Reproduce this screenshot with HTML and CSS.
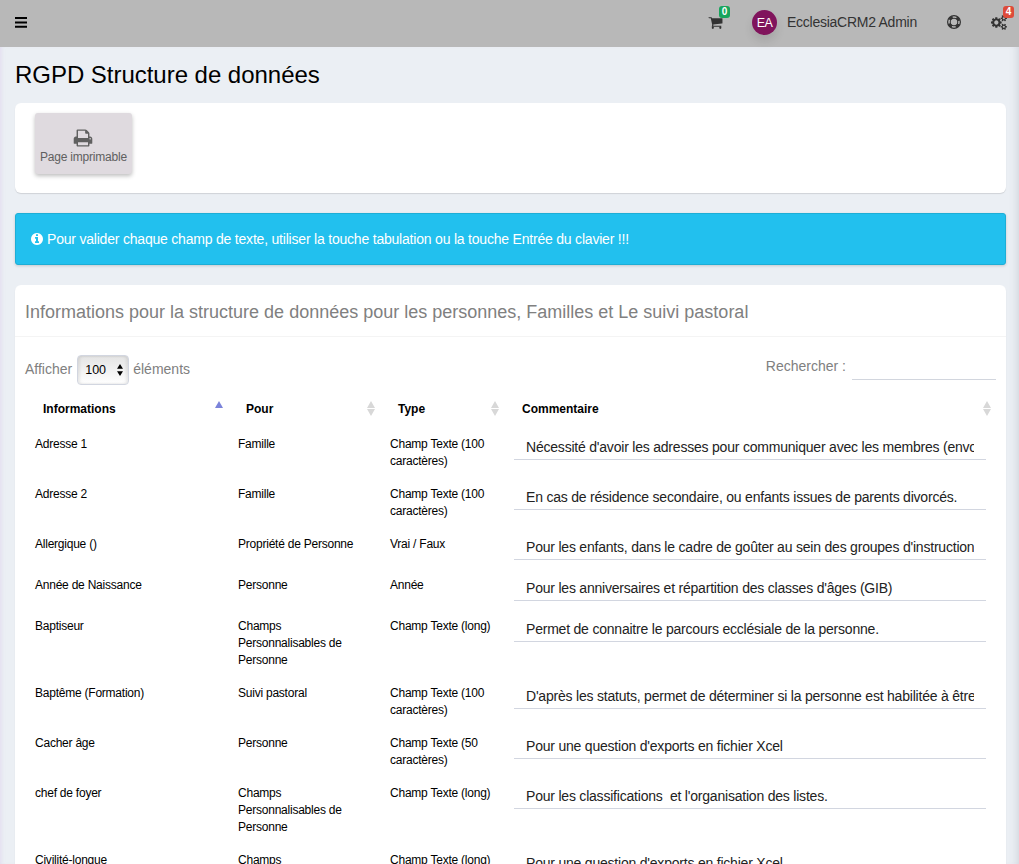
FILE: index.html
```html
<!DOCTYPE html>
<html lang="fr">
<head>
<meta charset="utf-8">
<title>RGPD Structure de données</title>
<link rel="stylesheet" href="styles.css">
</head>
<body>
<header class="topbar">
  <svg class="icon menu" viewBox="0 0 12 11"><path d="M0 0h12v2H0zM0 4.400h12v2H0zM0 8.800h12v2H0z"/></svg>
  <nav class="tools">
    <div class="tool cart"><svg class="icon" viewBox="0 0 1792 1792"><path d="M704 1536q0 52-38 90t-90 38-90-38-38-90 38-90 90-38 90 38 38 90zm896 0q0 52-38 90t-90 38-90-38-38-90 38-90 90-38 90 38 38 90zm128-1088v512q0 24-16.500 42.500t-40.500 21.500l-1044 122q13 60 13 70 0 16-24 64h920q26 0 45 19t19 45-19 45-45 19h-1024q-26 0-45-19t-19-45q0-11 8-31.500t16-36 21.500-40 15.500-29.500l-177-823h-204q-26 0-45-19t-19-45 19-45 45-19h256q16 0 28.500 6.500t19.500 15.500 13 24.500 8 26 5.500 29.500 4.500 26h1201q26 0 45 19t19 45z"/></svg><span class="badge green">0</span></div>
    <span class="avatar">EA</span>
    <span class="user">EcclesiaCRM2 Admin</span>
    <svg class="icon ring" viewBox="0 0 16 16"><g fill="none" stroke="currentColor"><circle cx="8" cy="8" r="7.300" stroke-width="1.400"/><circle cx="8" cy="8" r="4.300" stroke-width="1.200"/><circle cx="8" cy="8" r="5.700" stroke-width="3" stroke-dasharray="4.476 4.476" stroke-dashoffset="-2.238"/></g></svg>
    <div class="tool cogs"><svg class="icon" viewBox="0 0 1920 1792"><path d="M896 896q0-106-75-181t-181-75-181 75-75 181 75 181 181 75 181-75 75-181zm768 512q0-52-38-90t-90-38-90 38-38 90q0 53 37.500 90.500t90.500 37.500 90.500-37.500 37.500-90.500zm0-1024q0-52-38-90t-90-38-90 38-38 90q0 53 37.500 90.500t90.500 37.500 90.500-37.500 37.500-90.500zm-384 421v185q0 10-7 19.500t-16 10.500l-155 24q-11 35-32 76 34 48 90 115 7 11 7 20 0 12-7 19-23 30-82.500 89.500t-78.500 59.500q-11 0-21-7l-115-90q-37 19-77 31-11 108-23 155-7 24-30 24h-186q-11 0-20-7.500t-10-17.500l-23-153q-34-10-75-31l-118 89q-7 7-20 7-11 0-21-8-144-133-144-160 0-9 7-19 10-14 41-53t47-61q-23-44-35-82l-152-24q-10-1-17-9.500t-7-19.500v-185q0-10 7-19.500t16-10.500l155-24q11-35 32-76-34-48-90-115-7-11-7-20 0-12 7-20 22-30 82-89t79-59q11 0 21 7l115 90q34-18 77-32 11-108 23-154 7-24 30-24h186q11 0 20 7.500t10 17.500l23 153q34 10 75 31l118-89q8-7 20-7 11 0 21 8 144 133 144 160 0 8-7 19-12 16-42 54t-45 60q23 48 34 82l152 23q10 2 17 10.500t7 19.500zm640 533v140q0 16-149 31-12 27-30 52 51 113 51 138 0 4-4 7-122 71-124 71-8 0-46-47t-52-68q-20 2-30 2t-30-2q-14 21-52 68t-46 47q-2 0-124-71-4-3-4-7 0-25 51-138-18-25-30-52-149-15-149-31v-140q0-16 149-31 13-29 30-52-51-113-51-138 0-4 4-7 4-2 35-20t59-34 30-16q8 0 46 46.500t52 67.500q20-2 30-2t30 2q51-71 92-112l6-2q4 0 124 70 4 3 4 7 0 25-51 138 17 23 30 52 149 15 149 31zm0-1024v140q0 16-149 31-12 27-30 52 51 113 51 138 0 4-4 7-122 71-124 71-8 0-46-47t-52-68q-20 2-30 2t-30-2q-14 21-52 68t-46 47q-2 0-124-71-4-3-4-7 0-25 51-138-18-25-30-52-149-15-149-31v-140q0-16 149-31 13-29 30-52-51-113-51-138 0-4 4-7 4-2 35-20t59-34 30-16q8 0 46 46.500t52 67.500q20-2 30-2t30 2q51-71 92-112l6-2q4 0 124 70 4 3 4 7 0 25-51 138 17 23 30 52 149 15 149 31z"/></svg><span class="badge red">4</span></div>
  </nav>
</header>
<main class="content">
  <h1 class="title">RGPD Structure de données</h1>
  <section class="box actions">
    <div class="app-button"><svg class="icon" viewBox="0 0 1792 1792"><path d="M448 1536h896v-256h-896v256zm0-640h896v-384h-160q-40 0-68-28t-28-68v-160h-640v640zm1152 64q0-26-19-45t-45-19-45 19-19 45 19 45 45 19 45-19 19-45zm128 0v416q0 13-9.500 22.500t-22.500 9.500h-224v160q0 40-28 68t-68 28h-960q-40 0-68-28t-28-68v-160h-224q-13 0-22.500-9.500t-9.500-22.500v-416q0-79 56.500-135.500t135.500-56.500h64v-544q0-40 28-68t68-28h672q40 0 88 20t76 48l152 152q28 28 48 76t20 88v256h64q79 0 135.500 56.500t56.500 135.500z"/></svg><span class="app-label">Page imprimable</span></div>
  </section>
  <div class="alert"><svg class="icon" viewBox="128 128 1536 1536"><path d="M1152 1376v-160q0-14-9-23t-23-9h-96v-512q0-14-9-23t-23-9h-320q-14 0-23 9t-9 23v160q0 14 9 23t23 9h96v320h-96q-14 0-23 9t-9 23v160q0 14 9 23t23 9h448q14 0 23-9t9-23zm-128-896v-160q0-14-9-23t-23-9h-192q-14 0-23 9t-9 23v160q0 14 9 23t23 9h192q14 0 23-9t9-23zm640 416q0 209-103 385.500t-279.500 279.500-385.500 103-385.500-103-279.500-279.500-103-385.500 103-385.500 279.500-279.500 385.500-103 385.500 103 279.500 279.500 103 385.500z"/></svg><span>Pour valider chaque champ de texte, utiliser la touche tabulation ou la touche Entrée du clavier !!!</span></div>
  <section class="box data">
    <h2 class="box-title">Informations pour la structure de données pour les personnes, Familles et Le suivi pastoral</h2>
    <div class="controls">
      <div class="length"><span>Afficher</span><div class="select"><span>100</span><svg viewBox="0 0 6 12"><path d="M3 0l3 4.800H0zM3 12l3-4.800H0z"/></svg></div><span>éléments</span></div>
      <div class="search"><span>Rechercher :</span><div class="search-field"></div></div>
    </div>
    <table class="grid">
      <colgroup><col class="c1"><col class="c2"><col class="c3"><col class="c4"></colgroup>
      <thead><tr>
        <th><div class="head"><span>Informations</span><svg class="sort active" viewBox="0 0 8 15"><path d="M4 0l4 7H0z"/></svg></div></th>
        <th><div class="head"><span>Pour</span><svg class="sort" viewBox="0 0 8 15"><path d="M4 0l4 7H0zM4 15l4-7H0z"/></svg></div></th>
        <th><div class="head"><span>Type</span><svg class="sort" viewBox="0 0 8 15"><path d="M4 0l4 7H0zM4 15l4-7H0z"/></svg></div></th>
        <th><div class="head"><span>Commentaire</span><svg class="sort" viewBox="0 0 8 15"><path d="M4 0l4 7H0zM4 15l4-7H0z"/></svg></div></th>
      </tr></thead>
      <tbody>
        <tr><td>Adresse 1</td><td>Famille</td><td>Champ Texte (100<br>caractères)</td><td><div class="field"><div class="value">Nécessité d'avoir les adresses pour communiquer avec les membres (envo</div></div></td></tr>
        <tr><td>Adresse 2</td><td>Famille</td><td>Champ Texte (100<br>caractères)</td><td><div class="field"><div class="value">En cas de résidence secondaire, ou enfants issues de parents divorcés.</div></div></td></tr>
        <tr><td>Allergique ()</td><td>Propriété de Personne</td><td>Vrai / Faux</td><td><div class="field"><div class="value">Pour les enfants, dans le cadre de goûter au sein des groupes d'instruction</div></div></td></tr>
        <tr><td>Année de Naissance</td><td>Personne</td><td>Année</td><td><div class="field"><div class="value">Pour les anniversaires et répartition des classes d'âges (GIB)</div></div></td></tr>
        <tr><td>Baptiseur</td><td>Champs<br>Personnalisables de<br>Personne</td><td>Champ Texte (long)</td><td><div class="field"><div class="value">Permet de connaitre le parcours ecclésiale de la personne.</div></div></td></tr>
        <tr><td>Baptême (Formation)</td><td>Suivi pastoral</td><td>Champ Texte (100<br>caractères)</td><td><div class="field"><div class="value">D'après les statuts, permet de déterminer si la personne est habilitée à être</div></div></td></tr>
        <tr><td>Cacher âge</td><td>Personne</td><td>Champ Texte (50<br>caractères)</td><td><div class="field"><div class="value">Pour une question d'exports en fichier Xcel</div></div></td></tr>
        <tr><td>chef de foyer</td><td>Champs<br>Personnalisables de<br>Personne</td><td>Champ Texte (long)</td><td><div class="field"><div class="value">Pour les classifications  et l'organisation des listes.</div></div></td></tr>
        <tr><td>Civilité-longue</td><td>Champs<br>Personnalisables de<br>Personne</td><td>Champ Texte (long)</td><td><div class="field"><div class="value">Pour une question d'exports en fichier Xcel</div></div></td></tr>
      </tbody>
    </table>
  </section>
</main>
</body>
</html>
```
FILE: styles.css
```css
* { box-sizing: border-box; }
html, body { height: 100%; }
body {
  margin: 0;
  display: flex;
  flex-direction: column;
  overflow: hidden;
  font-family: "Liberation Sans", Arial, sans-serif;
  font-size: 14px;
  color: #000;
  background: #ebeff4;
}
.icon { display: block; fill: currentColor; flex: none; }

.topbar {
  flex: none;
  height: 47px;
  display: flex;
  align-items: center;
  justify-content: space-between;
  padding: 0 12px 3px 15px;
  background: #b8b8b8;
  color: #333;
}
.menu { width: 12px; height: 11px; color: #000; }
.tools { display: flex; align-items: center; }
.tool { position: relative; }
.cart .icon { width: 15px; height: 15px; margin-right: 1px; }
.cogs .icon { width: 16px; height: 15px; }
.badge {
  position: absolute;
  width: 11px;
  height: 12px;
  border-radius: 3px;
  color: #fff;
  font-size: 10px;
  font-weight: bold;
  line-height: 12px;
  text-align: center;
}
.green { background: #18a55c; left: 11px; top: -9px; }
.red { background: #dd4b39; left: 12px; top: -9px; }
.avatar {
  width: 25px;
  height: 25px;
  margin-left: 28px;
  border-radius: 50%;
  background: #80145c;
  color: #fff;
  font-size: 12.500px;
  letter-spacing: -0.600px;
  line-height: 26px;
  text-align: center;
  box-shadow: 0 6px 10px rgba(0, 0, 0, .1);
}
.user { width: 131px; margin-left: 10px; letter-spacing: -0.260px; white-space: nowrap; }
.ring { width: 14px; height: 14px; margin-left: 29px; }
.cogs { margin-left: 30px; }

.content {
  flex: 1;
  min-height: 0;
  overflow: hidden;
  padding: 0 13px 0 15px;
  box-shadow: inset 4px 0 4px -3px rgba(200, 170, 225, .28), inset -9px 0 8px -8px rgba(90, 100, 120, .22);
}
.title { margin: 0; height: 56px; font-size: 24px; font-weight: 400; line-height: 55px; letter-spacing: -0.030px; }
.box { background: #fff; border-radius: 6px; box-shadow: 0 1px 1px rgba(0, 0, 0, .12); }
.actions { height: 90px; padding: 10px 20px; }
.app-button {
  width: 97px;
  height: 61px;
  display: flex;
  flex-direction: column;
  align-items: center;
  padding-top: 15px;
  border-radius: 3px;
  background: #dfdadf;
  color: #606060;
  box-shadow: 0 2px 4px rgba(0, 0, 0, .26);
}
.app-button .icon { width: 20px; height: 20px; margin-right: 1px; }
.app-label { font-size: 12px; line-height: 18px; letter-spacing: -0.200px; white-space: nowrap; }
.alert {
  height: 52px;
  margin: 20px 0;
  display: flex;
  align-items: center;
  gap: 4px;
  padding-left: 15px;
  border: 1px solid #1daed6;
  border-radius: 3px;
  background: #22c0ee;
  color: #fff;
  white-space: nowrap;
  letter-spacing: -0.205px;
  box-shadow: 0 1px 3px rgba(0, 0, 0, .16);
}
.alert .icon { width: 12px; height: 12px; }

.data { height: 700px; }
.box-title {
  margin: 0;
  height: 52px;
  padding-left: 10px;
  border-bottom: 1px solid #f4f4f4;
  color: #808080;
  font-size: 18px;
  font-weight: 400;
  line-height: 54px;
  white-space: nowrap;
}
.controls { height: 58px; display: flex; justify-content: space-between; padding: 17px 10px 0; color: #808080; }
.length { display: flex; align-items: center; height: 30px; line-height: 16px; gap: 4px; margin-top: 1px; }
.length > span { padding-bottom: 2px; }
.select {
  width: 52px;
  height: 30px;
  margin-left: 1px;
  display: flex;
  align-items: center;
  justify-content: space-between;
  padding: 0 5px 0 7px;
  border: 1px solid #d2d6e0;
  border-radius: 4px;
  background: linear-gradient(#e4e4e4, #fff);
  box-shadow: inset 2px 0 3px rgba(0, 0, 0, .08), inset -2px 0 3px rgba(0, 0, 0, .08);
  color: #000;
  font-size: 12.500px;
}
.select svg { width: 6px; height: 12px; }
.search { display: flex; height: 26px; line-height: 25px; gap: 6px; }
.search-field { width: 144px; border-bottom: 1px solid #d2d6de; }

.grid { width: 971px; margin-left: 10px; table-layout: fixed; border-collapse: collapse; font-size: 12px; line-height: 17px; letter-spacing: -0.230px; }
.c1 { width: 203px; }
.c2 { width: 152px; }
.c3 { width: 124px; }
.c4 { width: 492px; }
.grid th { height: 33px; padding: 0 5px 4px 18px; text-align: left; letter-spacing: 0; }
.head { display: flex; align-items: center; justify-content: space-between; }
.sort { width: 8px; height: 15px; fill: #d8d8d8; margin-bottom: 2px; }
.active { fill: #7b83da; }
.grid td { padding: 8px 10px; vertical-align: top; white-space: nowrap; }
.grid td:last-child { padding: 0 10px 9px; letter-spacing: -0.210px; }
.field { height: 32px; padding: 0 12px; border-bottom: 1px solid #d2d6e0; }
.value { overflow: hidden; white-space: pre; font-size: 14px; line-height: 38px; height: 31px; color: #222; }
```
